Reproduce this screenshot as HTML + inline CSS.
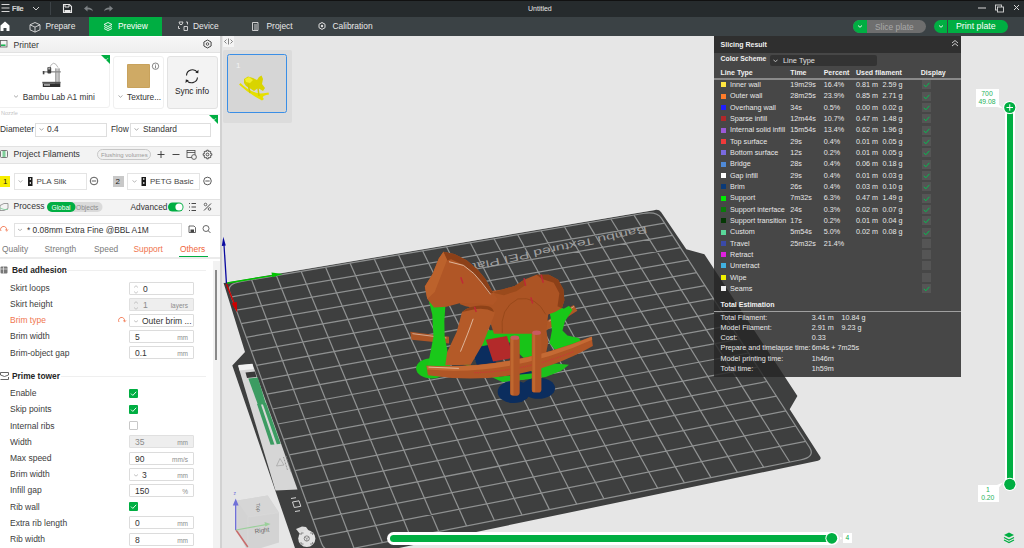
<!DOCTYPE html>
<html><head><meta charset="utf-8">
<style>
*{margin:0;padding:0;box-sizing:border-box}
html,body{width:1024px;height:548px;overflow:hidden;background:#e6e6e6;font-family:"Liberation Sans",sans-serif;}
.a{position:absolute}
.t{position:absolute;white-space:nowrap;line-height:1}
#title{left:0;top:0;width:1024px;height:17px;background:#262b2d;border-top:1px solid #111}
#tabs{left:0;top:17px;width:1024px;height:19px;background:#3b4245}
#left{left:0;top:36px;width:220px;height:512px;background:#fff}
#lborder{left:220px;top:36px;width:2px;height:512px;background:#d2d2d2}
.hdr{position:absolute;left:0;width:220px;background:#f3f3f3;border-bottom:1px solid #e2e2e2}
.lbl{position:absolute;left:10px;font-size:8.5px;color:#3c3c3c;white-space:nowrap;line-height:1}
.inp{position:absolute;left:129px;width:65px;height:13px;border:1px solid #dcdcdc;background:#fff;border-radius:1px}
.inp.dis{background:#eeeeee;border-color:#e0e0e0}
.inp .v{position:absolute;left:5px;top:2px;font-size:8.5px;color:#333;line-height:1}
.inp .u{position:absolute;right:5px;top:4px;font-size:6.5px;color:#8c8c8c;line-height:1}
.chk{position:absolute;left:129px;width:9px;height:9px;background:#00ae42;border-radius:1px}
.chk svg{position:absolute;left:0;top:0}
.sr{position:absolute;font-size:7.2px;color:#e8e8e8;white-space:nowrap;line-height:1}
.sq{position:absolute;left:721px;width:5px;height:5px}
.cb{position:absolute;left:922px;width:9px;height:9px;background:#555}
.cb svg{display:block}
</style></head><body>
<!-- TITLE BAR -->
<div id="title" class="a"></div>
<svg class="a" style="left:0;top:0" width="130" height="17">
 <g stroke="#d8d8d8" stroke-width="1.1"><path d="M1.5,4.5H9.5M1.5,8H9.5M1.5,11.5H9.5"/></g>
 <path d="M33,7l3,3 3,-3" stroke="#d0d0d0" stroke-width="1" fill="none"/>
 <path d="M50.5,2V15" stroke="#3c4246" stroke-width="1"/>
 <path d="M63.5,4.5h6l2,2v6h-8z" stroke="#e8e8e8" stroke-width="1.1" fill="none"/><path d="M65,4.5v2.5h4v-2.5" stroke="#e8e8e8" stroke-width="1" fill="none"/><rect x="64.5" y="10" width="6" height="2" fill="#e8e8e8"/>
 <path d="M84,8.5l3.5,-3v2c3,0 5,1 5.5,4c-1,-1.5 -3,-2 -5.5,-2v2z" fill="#7c8184"/>
 <path d="M113,8.5l-3.5,-3v2c-3,0 -5,1 -5.5,4c1,-1.5 3,-2 5.5,-2v2z" fill="#7c8184"/>
</svg>
<div class="t" style="left:12px;top:4.5px;font-size:7.2px;color:#ececec;-webkit-text-stroke:0.2px #ececec">File</div>
<div class="t" style="left:528px;top:4.5px;font-size:7px;color:#e6e6e6">Untitled</div>
<svg class="a" style="left:970px;top:0" width="54" height="17">
 <path d="M978,8H986" transform="translate(-970,0)" stroke="#d8d8d8" stroke-width="1"/>
 <rect x="25.5" y="5" width="6" height="5" fill="none" stroke="#d8d8d8" stroke-width="0.9"/><rect x="27.5" y="7" width="6" height="5" fill="#262b2d" stroke="#d8d8d8" stroke-width="0.9"/>
 <path d="M44,5l5,5M49,5l-5,5" stroke="#d8d8d8" stroke-width="1"/>
</svg>
<!-- TABS -->
<div id="tabs" class="a"></div>
<div class="a" style="left:89px;top:17px;width:73px;height:19px;background:#00ae42"></div>
<svg class="a" style="left:0;top:17px" width="380" height="19">
 <path d="M0.5,8.5L5,4.5 9.5,8.5V14H6.5V11H3.5V14H0.5Z" fill="#fff"/>
 <path d="M35,5.5l5,2.3v5l-5,2.3 -5,-2.3v-5z M30,7.8l5,2.3 5,-2.3 M35,10.1v5" stroke="#dcdcdc" stroke-width="0.9" fill="none"/>
 <path d="M108,5.5l4,2 -4,2 -4,-2z M104,9.5l4,2 4,-2 M104,11.5l4,2 4,-2" stroke="#fff" stroke-width="0.9" fill="none"/>
 <path d="M179,5h4l-1,2.5h-2z M178.5,9v2.5h1.5 M186,5h1.5v2.5 M184,9.5h3.5v4h-3.5z" stroke="#dcdcdc" stroke-width="0.9" fill="none"/>
 <path d="M252.5,5.5h5.5v8h-5.5z M254,8h3M254,10h3M254,12h3" stroke="#dcdcdc" stroke-width="0.9" fill="none"/>
 <path d="M322,5.5l3,1.7v3.5l-3,1.7 -3,-1.7v-3.5z" stroke="#e0e0e0" stroke-width="1" fill="none"/><circle cx="322" cy="9" r="1.2" fill="#e0e0e0"/>
</svg>
<div class="t" style="left:45.5px;top:21.5px;font-size:8.4px;color:#e9e9e9">Prepare</div>
<div class="t" style="left:118px;top:21.5px;font-size:8.4px;color:#fff">Preview</div>
<div class="t" style="left:193px;top:21.5px;font-size:8.4px;color:#e9e9e9">Device</div>
<div class="t" style="left:266.5px;top:21.5px;font-size:8.4px;color:#e9e9e9">Project</div>
<div class="t" style="left:332.5px;top:21.5px;font-size:8.4px;color:#e9e9e9">Calibration</div>
<!-- slice/print -->
<div class="a" style="left:853px;top:20px;width:73px;height:13px;border-radius:6.5px;background:#6e6e6e;overflow:hidden"><div class="a" style="left:0;top:0;width:13.5px;height:13px;background:#00ae42"></div></div>
<div class="t" style="left:875px;top:22.5px;font-size:8.4px;color:#a9a9a9">Slice plate</div>
<div class="a" style="left:934px;top:20px;width:74px;height:13px;border-radius:6.5px;background:#00ae42"></div>
<div class="a" style="left:947px;top:20px;width:1px;height:13px;background:#3b4245"></div>
<svg class="a" style="left:850px;top:17px" width="110" height="19"><path d="M8,8.5l2,1.8 2,-1.8" stroke="#fff" stroke-width="0.9" fill="none"/><path d="M89,8.5l2,1.8 2,-1.8" stroke="#fff" stroke-width="0.9" fill="none"/></svg>
<div class="t" style="left:956px;top:22px;font-size:8.8px;color:#fff">Print plate</div>

<!-- LEFT PANEL -->
<div id="left" class="a"></div>
<div id="lborder" class="a"></div>
<!-- printer header -->
<div class="hdr" style="top:36px;height:17px;border-top:1px solid #fff;background:linear-gradient(#f6f6f6,#efefef)"></div>
<svg class="a" style="left:0;top:36px" width="220" height="17">
 <rect x="0.5" y="4.5" width="6.5" height="6.5" fill="none" stroke="#5a5a5a" stroke-width="0.8"/><rect x="1" y="8.5" width="4.5" height="1.4" fill="#00ae42"/>
 <path d="M207.5,4l3.6,2v4l-3.6,2 -3.6,-2v-4z" fill="none" stroke="#333" stroke-width="0.9"/><circle cx="207.5" cy="8" r="1.3" fill="none" stroke="#333" stroke-width="0.8"/>
</svg>
<div class="t" style="left:13.5px;top:40.5px;font-size:8.6px;color:#333">Printer</div>
<!-- printer cards -->
<div class="a" style="left:-3px;top:55px;width:113px;height:53px;border:1px solid #f0f0f0;border-radius:3px;background:#fff"></div>
<div class="a" style="left:113px;top:55.5px;width:51px;height:53px;border:1px solid #f0f0f0;border-radius:3px;background:#fff"></div>
<div class="a" style="left:166.5px;top:55.5px;width:51.5px;height:53px;border:1px solid #e2e2e2;border-radius:3px;background:#f3f3f3"></div>
<svg class="a" style="left:0;top:50px" width="220" height="80">
 <path d="M101,5H110V14Z" fill="#00ae42"/><path d="M105,9l1.2,1 2,-2" stroke="#fff" stroke-width="0.6" fill="none"/>
 <!-- printer image -->
 <path d="M49.2,18.3 Q53.6,8.5 58.1,17.6" fill="none" stroke="#9a9a9a" stroke-width="0.7"/>
 <rect x="55.5" y="18.4" width="3.9" height="16.6" fill="#c8c8c8"/><path d="M55.7,18.4v16.6M59.2,18.4v16.6" stroke="#6a6a6a" stroke-width="0.6"/>
 <rect x="42.8" y="21.2" width="18" height="1.3" fill="#8a8a8a"/>
 <rect x="42.8" y="21" width="1.6" height="3.3" fill="#444"/>
 <rect x="47.4" y="17" width="3.8" height="6.5" rx="1" fill="#3c3c3c"/><rect x="48.2" y="17.5" width="2" height="2" fill="#aaa"/>
 <rect x="42.3" y="31.8" width="18.3" height="1.6" fill="#555"/>
 <rect x="42.8" y="33.4" width="17.5" height="3.6" fill="#2e2e2e"/><rect x="44" y="34.2" width="6" height="1.5" fill="#bdbdbd"/>
 <!-- texture plate -->
 <rect x="127" y="14" width="23" height="24" rx="1" fill="#c8a25c"/>
 <rect x="128" y="15" width="21" height="22" fill="#cfaa65"/>
 <circle cx="155.5" cy="16.2" r="3.2" fill="none" stroke="#555" stroke-width="0.7"/><path d="M155.5,15.3v3" stroke="#555" stroke-width="0.7"/><circle cx="155.5" cy="14.2" r="0.4" fill="#555"/>
 <!-- sync -->
 <path d="M186.5,25.5 A6,6 0 0 1 197.5,22.5" fill="none" stroke="#222" stroke-width="1.1"/><path d="M197.5,27.5 A6,6 0 0 1 186.5,30" fill="none" stroke="#222" stroke-width="1.1"/>
 <path d="M198.5,19.8l-0.2,3.5 -3,-0.6z" fill="#222"/><path d="M185.5,33l0.3,-3.6 3,0.8z" fill="#222"/>
 <path d="M14,45.5l2,1.8 2,-1.8" stroke="#888" stroke-width="0.7" fill="none"/>
 <path d="M118.5,45.5l2,1.8 2,-1.8" stroke="#888" stroke-width="0.7" fill="none"/>
</svg>
<div class="t" style="left:22.8px;top:92.5px;font-size:8.3px;color:#333">Bambu Lab A1 mini</div>
<div class="t" style="left:127px;top:92.5px;font-size:8.3px;color:#333">Texture...</div>
<div class="t" style="left:175px;top:87px;font-size:8.3px;color:#222">Sync info</div>
<div class="t" style="left:1px;top:111px;font-size:5.5px;color:#c4c4c4">Nozzle</div>
<div class="a" style="left:20px;top:114px;width:200px;height:1px;background:#f0f0f0"></div>
<svg class="a" style="left:0;top:110px" width="220" height="30"><path d="M209,5H218V14Z" fill="#00ae42"/><path d="M213,9l1.2,1 2,-2" stroke="#fff" stroke-width="0.6" fill="none"/>
<path d="M39.5,18.5l2,1.6 2,-1.6" stroke="#888" stroke-width="0.7" fill="none"/><path d="M134.5,18.5l2,1.6 2,-1.6" stroke="#888" stroke-width="0.7" fill="none"/></svg>
<div class="t" style="left:0px;top:125px;font-size:8.4px;color:#333">Diameter</div>
<div class="a" style="left:35px;top:123px;width:72px;height:13.5px;border:1px solid #dedede"></div>
<div class="t" style="left:47px;top:125px;font-size:8.4px;color:#333">0.4</div>
<div class="t" style="left:111px;top:125px;font-size:8.4px;color:#333">Flow</div>
<div class="a" style="left:130px;top:123px;width:80.5px;height:13.5px;border:1px solid #dedede"></div>
<div class="t" style="left:143px;top:125px;font-size:8.4px;color:#333">Standard</div>
<!-- project filaments -->
<div class="hdr" style="top:146px;height:17.5px;border-top:1px solid #e2e2e2"></div>
<svg class="a" style="left:0;top:146px" width="220" height="18">
 <rect x="0.5" y="4.5" width="7" height="7" rx="1" fill="none" stroke="#5a5a5a" stroke-width="0.8"/><rect x="2.5" y="5" width="3" height="6" fill="#7fcf9a"/>
 <rect x="97.5" y="3.5" width="53" height="10" rx="5" fill="#f0f0f0" stroke="#bdbdbd" stroke-width="0.8"/>
 <path d="M157.5,8.5h7M161,5v7" stroke="#333" stroke-width="0.9"/>
 <path d="M172.5,8.5h7" stroke="#333" stroke-width="0.9"/>
 <rect x="187" y="4.5" width="8" height="7" fill="none" stroke="#444" stroke-width="0.8"/><path d="M187,6.5h8" stroke="#444" stroke-width="0.8"/><circle cx="194" cy="11" r="2.4" fill="#f3f3f3" stroke="#444" stroke-width="0.8"/>
 <path d="M210.58,7.62 L211.83,7.71 L211.83,9.29 L210.58,9.38 L210.30,10.05 L211.12,11.00 L210.00,12.12 L209.05,11.30 L208.38,11.58 L208.29,12.83 L206.71,12.83 L206.62,11.58 L205.95,11.30 L205.00,12.12 L203.88,11.00 L204.70,10.05 L204.42,9.38 L203.17,9.29 L203.17,7.71 L204.42,7.62 L204.70,6.95 L203.88,6.00 L205.00,4.88 L205.95,5.70 L206.62,5.42 L206.71,4.17 L208.29,4.17 L208.38,5.42 L209.05,5.70 L210.00,4.88 L211.12,6.00 L210.30,6.95Z" fill="none" stroke="#333" stroke-width="0.8"/><circle cx="207.5" cy="8.5" r="1.4" fill="none" stroke="#333" stroke-width="0.8"/>
</svg>
<div class="t" style="left:13.5px;top:150px;font-size:8.6px;color:#333">Project Filaments</div>
<div class="t" style="left:101px;top:151.5px;font-size:6px;color:#9a9a9a">Flushing volumes</div>
<!-- filament row -->
<div class="a" style="left:0;top:175.5px;width:10px;height:11px;background:#f7ee00"></div>
<div class="t" style="left:3px;top:177.5px;font-size:8px;color:#222">1</div>
<div class="a" style="left:13.5px;top:173px;width:73px;height:16.5px;border:1px solid #e4e4e4;background:#fff"></div>
<div class="a" style="left:113px;top:176.2px;width:10.5px;height:10.5px;background:#c8c8c8"></div>
<div class="t" style="left:115.5px;top:177.5px;font-size:8px;color:#222">2</div>
<div class="a" style="left:126.5px;top:173px;width:73.5px;height:16.5px;border:1px solid #e4e4e4;background:#fff"></div>
<svg class="a" style="left:0;top:170px" width="220" height="24">
 <path d="M18.5,10.5l2,1.6 2,-1.6" stroke="#999" stroke-width="0.7" fill="none"/>
 <rect x="28" y="7" width="4.5" height="9" fill="#1a1a1a"/><rect x="29.8" y="8" width="1" height="2" fill="#fff"/><rect x="29.8" y="12" width="1" height="2" fill="#fff"/>
 <circle cx="94" cy="11" r="3.8" fill="none" stroke="#333" stroke-width="0.8"/><path d="M91.8,11h4.4" stroke="#333" stroke-width="0.8"/>
 <path d="M132.5,10.5l2,1.6 2,-1.6" stroke="#999" stroke-width="0.7" fill="none"/>
 <rect x="141.5" y="7" width="4.5" height="9" fill="#1a1a1a"/><rect x="143.3" y="8" width="1" height="2" fill="#fff"/><rect x="143.3" y="12" width="1" height="2" fill="#fff"/>
 <circle cx="207.5" cy="11" r="3.8" fill="none" stroke="#333" stroke-width="0.8"/><path d="M205.3,11h4.4" stroke="#333" stroke-width="0.8"/>
</svg>
<div class="t" style="left:36.5px;top:177.6px;font-size:8px;color:#444">PLA Silk</div>
<div class="t" style="left:150px;top:177.6px;font-size:8px;color:#444">PETG Basic</div>
<!-- process header -->
<div class="hdr" style="top:198.5px;height:17px;border-top:1px solid #e2e2e2"></div>
<svg class="a" style="left:0;top:198px" width="220" height="18">
 <path d="M0,7.5l4,-2h4v5l-4,2h-4z" fill="none" stroke="#777" stroke-width="0.7"/><path d="M0,10l4,1.5h4" fill="none" stroke="#7fcf9a" stroke-width="0.8"/>
 <rect x="47" y="4" width="55.5" height="10" rx="5" fill="#dadada"/>
 <rect x="47" y="4" width="28.5" height="10" rx="5" fill="#00ae42"/>
 <rect x="168" y="4.5" width="15.5" height="9" rx="4.5" fill="#00ae42"/><circle cx="179" cy="9" r="3.6" fill="#fff"/>
 <path d="M189,5.5h1M189,9h1M189,12.5h1M191.5,5.5h4.5M191.5,9h4.5M191.5,12.5h4.5" stroke="#333" stroke-width="0.9"/>
 <path d="M204,12.5l7,-7" stroke="#333" stroke-width="0.9"/><circle cx="205.5" cy="6.5" r="1.3" fill="none" stroke="#333" stroke-width="0.7"/><circle cx="209.5" cy="11" r="1.3" fill="none" stroke="#333" stroke-width="0.7"/>
</svg>
<div class="t" style="left:13.5px;top:202px;font-size:8.6px;color:#333">Process</div>
<div class="t" style="left:51.5px;top:204.5px;font-size:6.6px;color:#fff">Global</div>
<div class="t" style="left:76px;top:204.5px;font-size:6.6px;color:#8c8c8c">Objects</div>
<div class="t" style="left:130.5px;top:203px;font-size:8.3px;color:#333">Advanced</div>
<!-- preset row -->
<div class="a" style="left:13.5px;top:222.7px;width:168px;height:14px;border:1px solid #e2e2e2;background:#fff"></div>
<svg class="a" style="left:0;top:218px" width="220" height="22">
 <path d="M1,13 A3,3 0 1 1 6.5,12" fill="none" stroke="#f0653a" stroke-width="0.8"/><path d="M5.5,11.5l1.2,1.8 1.3,-1.9" fill="none" stroke="#f0653a" stroke-width="0.7"/>
 <path d="M18,11l2,1.6 2,-1.6" stroke="#999" stroke-width="0.7" fill="none"/>
 <path d="M189,8h5l1.5,1.5v5h-6.5z" fill="none" stroke="#444" stroke-width="0.8"/><path d="M190.5,11.5h3.5v3h-3.5z" fill="#444"/>
 <circle cx="206" cy="10.5" r="3" fill="none" stroke="#444" stroke-width="0.8"/><path d="M208.2,12.7l2.2,2.2" stroke="#444" stroke-width="0.9"/>
</svg>
<div class="t" style="left:27px;top:225.5px;font-size:8.4px;color:#333">* 0.08mm Extra Fine @BBL A1M</div>
<!-- tabs -->
<div class="t" style="left:2px;top:244.5px;font-size:8.4px;color:#7a7a7a">Quality</div>
<div class="t" style="left:44.5px;top:244.5px;font-size:8.4px;color:#7a7a7a">Strength</div>
<div class="t" style="left:94px;top:244.5px;font-size:8.4px;color:#7a7a7a">Speed</div>
<div class="t" style="left:133.5px;top:244.5px;font-size:8.4px;color:#f0764f">Support</div>
<div class="t" style="left:180px;top:244.5px;font-size:8.4px;color:#f0653a">Others</div>
<div class="a" style="left:179px;top:256px;width:29px;height:1.5px;background:#00ae42"></div>
<div class="a" style="left:0;top:257px;width:220px;height:1.5px;background:#ebebeb"></div>
<!-- scrollbar -->
<div class="a" style="left:213px;top:261px;width:7px;height:287px;background:#f2f2f2"></div>
<div class="a" style="left:215px;top:270px;width:2px;height:90px;background:#8a8a8a"></div>

<!-- FORM -->
<div class="t" style="left:12px;top:265.6px;font-size:8.4px;font-weight:bold;color:#262626">Bed adhesion</div>
<svg class="a" style="left:0;top:264px" width="10" height="12"><rect x="0.5" y="2.5" width="7" height="7" rx="1" fill="#777"/><path d="M0.5,5h7M3.5,2.5v7" stroke="#fff" stroke-width="0.6"/></svg>
<div class="a" style="left:66px;top:270px;width:140px;height:1px;background:#efefef"></div>
<div class="lbl" style="top:283.8px;color:#3c3c3c">Skirt loops</div>
<div class="inp" style="top:281.5px"><svg class="a" style="left:1px;top:0" width="10" height="13"><path d="M3,4.5l2,-1.8 2,1.8M3,8.5l2,1.8 2,-1.8" stroke="#b0b0b0" stroke-width="0.7" fill="none"/></svg><span class="v" style="left:13px;color:#333">0</span></div>
<div class="lbl" style="top:299.8px;color:#3c3c3c">Skirt height</div>
<div class="inp dis" style="top:297.5px"><svg class="a" style="left:1px;top:0" width="10" height="13"><path d="M3,4.5l2,-1.8 2,1.8M3,8.5l2,1.8 2,-1.8" stroke="#b0b0b0" stroke-width="0.7" fill="none"/></svg><span class="v" style="left:13px;color:#8a8a8a">1</span><span class="u">layers</span></div>
<div class="lbl" style="top:316.0px;color:#f0764f">Brim type</div>
<div class="inp" style="top:313.7px"><svg class="a" style="left:1px;top:0" width="10" height="13"><path d="M3,5.5l2,1.6 2,-1.6" stroke="#aaa" stroke-width="0.7" fill="none"/></svg><span class="v" style="left:12px;color:#333">Outer brim ...</span></div>
<svg class="a" style="left:117px;top:314px" width="10" height="12"><path d="M2,8 A3,3 0 1 1 7.5,7" fill="none" stroke="#f0653a" stroke-width="0.8"/><path d="M6.5,6.3l1.1,1.8 1.4,-1.8" fill="none" stroke="#f0653a" stroke-width="0.7"/></svg>
<div class="lbl" style="top:332.3px;color:#3c3c3c">Brim width</div>
<div class="inp" style="top:330.0px"><span class="v" style="left:5px;color:#333">5</span><span class="u">mm</span></div>
<div class="lbl" style="top:348.5px;color:#3c3c3c">Brim-object gap</div>
<div class="inp" style="top:346.2px"><span class="v" style="left:5px;color:#333">0.1</span><span class="u">mm</span></div>
<div class="t" style="left:12px;top:371.6px;font-size:8.4px;font-weight:bold;color:#262626">Prime tower</div>
<svg class="a" style="left:0;top:370px" width="10" height="12"><path d="M0.5,2.5h8v2.5l-4,1.5 -4,-1.5z M0.5,9.5h8v-2.5" fill="none" stroke="#555" stroke-width="0.9"/></svg>
<div class="a" style="left:61px;top:376px;width:145px;height:1px;background:#efefef"></div>
<div class="lbl" style="top:389.1px;color:#3c3c3c">Enable</div>
<div class="chk" style="top:388.8px"><svg width="9" height="9"><path d="M2,4.6l1.8,1.8 3.4,-3.6" stroke="#fff" stroke-width="0.9" fill="none"/></svg></div>
<div class="lbl" style="top:405.3px;color:#3c3c3c">Skip points</div>
<div class="chk" style="top:405.0px"><svg width="9" height="9"><path d="M2,4.6l1.8,1.8 3.4,-3.6" stroke="#fff" stroke-width="0.9" fill="none"/></svg></div>
<div class="lbl" style="top:421.5px;color:#3c3c3c">Internal ribs</div>
<div class="chk" style="top:421.2px;background:#fff;border:1px solid #c8c8c8"></div>
<div class="lbl" style="top:437.7px;color:#3c3c3c">Width</div>
<div class="inp dis" style="top:435.4px"><span class="v" style="left:5px;color:#8a8a8a">35</span><span class="u">mm</span></div>
<div class="lbl" style="top:453.9px;color:#3c3c3c">Max speed</div>
<div class="inp" style="top:451.6px"><span class="v" style="left:5px;color:#333">90</span><span class="u">mm/s</span></div>
<div class="lbl" style="top:470.1px;color:#3c3c3c">Brim width</div>
<div class="inp" style="top:467.8px"><svg class="a" style="left:1px;top:0" width="10" height="13"><path d="M3,5.5l2,1.6 2,-1.6" stroke="#aaa" stroke-width="0.7" fill="none"/></svg><span class="v" style="left:12px;color:#333">3</span><span class="u">mm</span></div>
<div class="lbl" style="top:486.3px;color:#3c3c3c">Infill gap</div>
<div class="inp" style="top:484.0px"><span class="v" style="left:5px;color:#333">150</span><span class="u">%</span></div>
<div class="lbl" style="top:502.5px;color:#3c3c3c">Rib wall</div>
<div class="chk" style="top:502.2px"><svg width="9" height="9"><path d="M2,4.6l1.8,1.8 3.4,-3.6" stroke="#fff" stroke-width="0.9" fill="none"/></svg></div>
<div class="lbl" style="top:518.7px;color:#3c3c3c">Extra rib length</div>
<div class="inp" style="top:516.4px"><span class="v" style="left:5px;color:#333">0</span><span class="u">mm</span></div>
<div class="lbl" style="top:534.9px;color:#3c3c3c">Rib width</div>
<div class="inp" style="top:532.6px"><span class="v" style="left:5px;color:#333">8</span><span class="u">mm</span></div>
<!-- CANVAS -->
<svg class="a" style="left:0;top:0" width="1024" height="548" viewBox="0 0 1024 548">
<path d="M223.6,283 L655,210 Q659,209.3 661,212 L686.3,249.2 L704.4,254.3 L797.4,396.1 L789.7,409.2 L820.4,457 Q821.5,460 818,460.8 L375,553 L295,548 L232.3,365.5 L245,352 Z" fill="#3e3f3f"/>
<path d="M251.6,279.7L354.0,548.2M231.5,296.9L664.6,223.1M276.4,275.5L382.4,542.6M236.3,310.2L672.5,235.3M301.1,271.3L410.6,537.0M241.2,323.6L680.4,247.6M325.6,267.2L438.7,531.5M246.2,337.3L688.5,260.1M350.0,263.1L466.6,526.0M251.3,351.2L696.7,272.7M374.3,259.0L494.4,520.5M256.4,365.3L705.0,285.6M398.5,254.9L522.0,515.0M261.7,379.6L713.4,298.7M422.6,250.8L549.5,509.6M267.0,394.2L722.0,311.9M446.5,246.8L576.8,504.2M272.4,409.0L730.7,325.4M470.3,242.7L603.9,498.8M277.9,424.0L739.6,339.1M494.1,238.7L630.9,493.5M283.5,439.3L748.6,353.0M517.7,234.7L657.7,488.2M289.2,454.8L757.7,367.1M541.1,230.8L684.4,482.9M295.0,470.7L767.0,381.5M564.5,226.8L711.0,477.6M300.8,486.7L776.4,396.1M587.8,222.9L737.4,472.4M306.8,503.1L786.0,410.9M610.9,219.0L763.6,467.2M312.9,519.7L795.7,426.0M634.0,215.1L789.7,462.0M319.1,536.7L805.6,441.3" stroke="#8f9191" stroke-width="1.25" fill="none"/>
<path d="M241.7,281.4L643.2,213.5Q656.9,211.2 661.5,218.3L809.6,447.5Q815.7,456.9 800.1,460.0L342.6,550.5Q325.4,553.9 321.6,543.5L229.6,291.7Q226.7,283.9 241.7,281.4Z" stroke="#8f9191" stroke-width="1.25" fill="none"/>
<path d="M224,282.6 L655,209.6" stroke="#f2f2f2" stroke-width="0.6" opacity="0.8"/>

<!-- axes -->
<path d="M226.4,283 L224,245" stroke="#0a0aa0" stroke-width="1.3"/>
<path d="M223.3,236.8 L221.8,246 L225.8,245.6 Z" fill="#0a0aa0"/>
<path d="M227.3,283 L272,275.6" stroke="#00c400" stroke-width="1.4"/>
<path d="M283,273.9 L271.5,272.6 L272.3,277.3 Z" fill="#00c400"/>
<path d="M226.4,284 L234,303" stroke="#d00000" stroke-width="1.4"/>
<path d="M237.2,312.5 L231.8,303.5 L236.8,301.8 Z" fill="#d00000"/>
<!-- bed label text -->
<text x="0" y="0" transform="translate(555.5,249) rotate(167.9) scale(1.6,1)" text-anchor="middle" dominant-baseline="central" font-family="Liberation Sans" font-size="10" fill="#a0a0a0">Bambu Textured PEI Plate</text>
<!-- sticker -->
<path d="M238,365.5 L252.5,364 L297.5,489.5 L275.5,490.5 Z" fill="#d6d6d6"/>
<path d="M238.4,365 L252.4,363.7 L253.5,369 L239.5,370.5 Z" fill="#f2f2f2"/>
<path d="M245.5,372.5 L255,371.5 L256.5,377 L247,378 Z" fill="#3a3a3a"/>
<path d="M248.3,378.5 L257.8,377.6 L266,404 L258,405 Z" fill="#3c9c62"/>
<path d="M257,404 L260.6,403.6 L274.4,444.4 L270.6,444.8 Z" fill="#3c9c62"/>
<path d="M262.5,403.3 L266.1,402.9 L280.6,443.8 L276.8,444.2 Z" fill="#3c9c62"/>
<path d="M276.5,466 L280,458.5 L284,465 Z" fill="none" stroke="#999" stroke-width="0.6"/>
<path d="M283.5,457 L287.5,470 M286,456 L291,472" stroke="#8a8a8a" stroke-width="0.9" stroke-dasharray="1 0.6"/>
<!-- bed small icons -->
<path d="M291,498.5l5,-0.8M292.5,502l6.5,-1.2 1.8,5.5 -6.5,1.2z M295,511.5l5,-0.8" stroke="#e4e4e4" stroke-width="0.9" fill="none"/>
<!-- camera icon -->
<path d="M296,529 L302,526.5 L306,527 L309,531 L300,534 Z" fill="#dcdcdc"/>
<circle cx="306.8" cy="538.5" r="8.6" fill="#e2e2e2"/>
<path d="M301,535v-2h2.5M312.6,535v-2h-2.5M301,542v2h2.5M312.6,542v2h-2.5" stroke="#707070" stroke-width="0.8" fill="none"/><circle cx="306.8" cy="538.5" r="2.6" fill="none" stroke="#707070" stroke-width="0.8"/><path d="M306.8,538.5v2.6M306.8,538.5l-2.2,-1.4M306.8,538.5l2.2,-1.4" stroke="#707070" stroke-width="0.6"/>
<!-- view cube -->
<path d="M237.1,500.6 L267.7,495.6 L279,512.7 L279,542.6 L247.8,552 L237.1,530 Z" fill="#d3d3d3"/>
<path d="M237.1,500.6 L267.7,495.6 L279,512.7 L248,517 Z" fill="#d6d6d6"/>
<path d="M248,517 L279,512.7 M248,517 L247.8,552" stroke="#dadada" stroke-width="0.5"/>
<text x="0" y="0" font-family="Liberation Sans" font-size="6.3" fill="#6a6a6a" transform="translate(255,533.5) rotate(-8)">Right</text>
<text x="0" y="0" font-family="Liberation Sans" font-size="5.2" fill="#6a6a6a" transform="translate(256,503.5) rotate(82)">Top</text>
<path d="M235.7,530 L235.7,504" stroke="#7070d8" stroke-width="1.4"/><path d="M235.7,498.4 L232.8,505.5 L238.6,505.5 Z" fill="#7070d8"/>
<text x="233.4" y="495" font-family="Liberation Sans" font-size="5" fill="#7070d8">z</text>
<path d="M236,530 L247.8,547" stroke="#c86a6a" stroke-width="1.5"/>
<path d="M236,530 L266,524.6" stroke="#9ad09a" stroke-width="1.1"/><path d="M270.5,524 L264.5,522 L265.3,526.5 Z" fill="#9ad09a"/>
<!-- HORSE -->
<g transform="translate(400,240) scale(0.31008)">
 <!-- back rocker -->
 <path d="M33,296 L158,312 L158,334 L37,322 Z" fill="#ac5526"/>
 <path d="M40,302 L150,316" stroke="#e8d0c0" stroke-width="2.2"/>
 <path d="M455,272 L560,210 L572,228 L468,294 Z" fill="#b05826"/>
 <path d="M480,262 L562,214" stroke="#e8d0c0" stroke-width="2"/>
 <!-- green -->
 <ellipse cx="102" cy="414" rx="50" ry="33" fill="#18c418"/>
 <path d="M88,176 L115,188 L152,198 L146,218 L143,262 L144,311 L158,384 L162,410 L88,410 L94,384 L108,311 L104,240 Z" fill="#1ac81a"/>
 <path d="M200,398 L330,458 L420,448 L470,442 L520,422 L545,402 L500,398 L420,418 L330,420 Z" fill="#1cc01c"/>
 <path d="M476,205 L505,210 L528,222 L545,212 L556,226 L532,262 L524,292 L540,308 L576,316 L592,336 L568,352 L500,354 L482,332 L490,292 L486,250 Z" fill="#18c818"/>
 <path d="M230,292 L400,290 L432,300 L442,380 L410,392 L380,362 L362,330 L240,345 Z" fill="#18c418"/>
 <!-- blue brim -->
 <path d="M230,350 L292,338 L310,398 L248,404 Z" fill="#0b2d5e"/>
 <path d="M290,415 L400,400 L430,430 L320,440 Z" fill="#0b2d5e"/>
 <ellipse cx="367" cy="490" rx="52" ry="36" fill="#0b2d5e"/>
 <ellipse cx="446" cy="478" rx="54" ry="34" fill="#0b2d5e"/>
 <!-- red seat -->
 <path d="M277,322 L345,310 L366,380 L300,392 Z" fill="#b32a2a"/>
 <!-- body piece -->
 <path d="M290,165 L330,160 L370,148 L400,128 L440,112 L480,112 L510,128 L527,160 L530,195 L522,220 L500,232 L478,240 L472,290 L478,330 L470,372 L445,376 L440,320 L425,302 L303,302 L290,262 L250,222 L212,214 L192,206 L205,188 Z" fill="#ac5424"/>
 <!-- head piece -->
 <path d="M140,38 L175,45 L215,65 L250,95 L275,125 L300,170 L315,190 L300,210 L250,205 L195,203 L150,215 L110,218 L88,190 L80,150 L105,110 L125,60 Z" fill="#b05626"/>
 <!-- front leg piece -->
 <path d="M200,232 Q236,204 286,214 Q312,226 303,244 L267,335 L228,402 L146,404 L152,362 L183,296 Z" fill="#b45a28"/>
 <path d="M200,232 Q236,204 286,214 Q300,220 303,232 Q270,215 230,226 Z" fill="#8e4218"/>
 <path d="M236,254 Q220,300 195,360" stroke="#f0e0d0" stroke-width="2.2" fill="none"/>
 <!-- head top face -->
 <path d="M140,38 L175,45 L215,65 L250,95 L275,125 L300,170 L288,173 L262,136 L236,107 L203,80 L165,62 L150,66 Z" fill="#8c4018"/>
 <path d="M158,70 L205,82 L238,108 L264,138 L292,175" stroke="#f4e4d4" stroke-width="2.2" fill="none"/>
 <path d="M125,60 L140,38 L152,64 L112,168 L88,190 L80,150 L105,110 Z" fill="#bc622c"/>
 <!-- rump shade -->
 <path d="M440,112 L480,112 L510,128 L527,160 L530,195 L522,220 L508,214 L514,172 L496,138 L458,126 Z" fill="#8c4018"/>
 <path d="M300,170 L330,160 L370,148 L400,128 L405,145 L375,165 L335,178 Z" fill="#9a4a1c"/>
 <!-- hind disk edge -->
 <path d="M330,300 Q320,220 380,190 Q440,180 470,240" stroke="#98481a" stroke-width="3" fill="none"/>
 <!-- slots -->
 <path d="M196,120 L203,140 M240,215 L246,232 M400,123 L405,148 M455,112 L462,138 M422,185 L428,205" stroke="#c02838" stroke-width="4.5"/>
 <!-- front rocker -->
 <path d="M85,405 Q353,420 618,311 L622,342 Q380,480 90,436 Z" fill="#b05626"/>
 <path d="M86,406 Q353,421 619,312 L620,322 Q360,440 88,418 Z" fill="#c46a34"/>
 <path d="M92,410 L190,414" stroke="#f0dcc8" stroke-width="2.2"/>
 <path d="M240,428 Q400,424 560,360" stroke="#c83838" stroke-width="4" stroke-dasharray="3 3" fill="none"/>
 <!-- posts -->
 <rect x="355" y="312" width="31" height="190" rx="10" fill="#b05626"/>
 <rect x="357" y="312" width="9" height="188" fill="#c06830"/>
 <ellipse cx="370.5" cy="315" rx="14" ry="7" fill="#c85a60"/>
 <rect x="425" y="296" width="31" height="196" rx="10" fill="#b05626"/>
 <rect x="427" y="296" width="9" height="194" fill="#c06830"/>
 <ellipse cx="440.5" cy="299" rx="14" ry="7" fill="#c85a60"/>
</g>
</svg>


<!-- thumbnails -->
<div class="a" style="left:223px;top:36px;width:11px;height:11px;background:#f4f4f4"></div>
<svg class="a" style="left:223px;top:36px" width="11" height="11"><path d="M3.5,3.5l-2,2 2,2M7.5,3.5l2,2 -2,2M5.5,2.5v6" stroke="#555" stroke-width="0.7" fill="none"/></svg>
<div class="a" style="left:223.3px;top:49.8px;width:68.3px;height:73.6px;background:#dcdcdc;border-radius:2px"></div>
<div class="a" style="left:227px;top:53.6px;width:59.7px;height:59.6px;background:#d6d6d6;border:1.5px solid #3a8ee6;border-radius:2.5px"></div>
<div class="t" style="left:236px;top:62px;font-size:8px;color:#f2f2f2">1</div>
<svg class="a" style="left:227px;top:53px" width="60" height="60">
 <path d="M12,31.5 Q22,41 35,47.5 L37,46 Q33,43 42,41.5 L41.5,39.5 Q33,41 30,40 Q20,37 13.5,30 Z" fill="#e6e000"/>
 <path d="M17,26 L21,23.5 L26,25 L30,27 L32,24 L34.5,22.5 L36,26 L35,31 L38,35 L36,38 L31,35 L27,38 L24,36 L19,33 L17,30 Z" fill="#d9d400"/>
 <path d="M18,26 L22,24 L26,27 L23,30 L19,29 Z" fill="#f2ee30"/>
 <path d="M21,31 L23,40 M31,35 L32,43" stroke="#d0cc00" stroke-width="1.5"/>
</svg>
<!-- SLICING RESULT PANEL -->
<div class="a" style="left:714px;top:36px;width:247px;height:17px;background:rgba(40,40,40,0.96)"></div>
<div class="a" style="left:714px;top:53px;width:247px;height:324px;background:rgba(38,38,38,0.83)"></div>

<div class="t" style="left:720.6px;top:41.3px;font-size:7px;font-weight:bold;color:#f0f0f0">Slicing Result</div>
<svg class="a" style="left:950px;top:38px" width="10" height="12"><path d="M2,5l3,-2.5 3,2.5M2,8l3,-2.5 3,2.5" stroke="#ddd" stroke-width="0.9" fill="none"/></svg>
<div class="t" style="left:720.6px;top:56.1px;font-size:6.8px;font-weight:bold;color:#f0f0f0">Color Scheme</div>
<div class="a" style="left:770.3px;top:55px;width:106.5px;height:11px;background:#333;border-radius:2px"></div>
<svg class="a" style="left:770.3px;top:54.7px" width="14" height="12"><path d="M3.5,5l2,1.5 2,-1.5" stroke="#ddd" stroke-width="0.8" fill="none"/></svg>
<div class="t" style="left:783px;top:56.5px;font-size:7.4px;color:#e0e0e0">Line Type</div>
<div class="t" style="left:720.6px;top:69px;font-size:7px;font-weight:bold;color:#f0f0f0">Line Type</div>
<div class="t" style="left:790.3px;top:69px;font-size:7px;font-weight:bold;color:#f0f0f0">Time</div>
<div class="t" style="left:823.7px;top:69px;font-size:7px;font-weight:bold;color:#f0f0f0">Percent</div>
<div class="t" style="left:856px;top:69px;font-size:7px;font-weight:bold;color:#f0f0f0">Used filament</div>
<div class="t" style="left:920.8px;top:69px;font-size:7px;font-weight:bold;color:#f0f0f0">Display</div>
<div class="a" style="left:714px;top:78px;width:247px;height:1.5px;background:#8a8a8a"></div>
<div class="sq" style="top:82.3px;background:#ffe640"></div>
<div class="sr" style="left:730px;top:81.1px">Inner wall</div>
<div class="sr" style="left:790.3px;top:81.1px">19m29s</div>
<div class="sr" style="left:823.7px;top:81.1px">16.4%</div>
<div class="sr" style="left:856px;top:81.1px">0.81 m</div>
<div class="sr" style="left:882.5px;top:81.1px">2.59 g</div>
<div class="cb" style="top:80.3px"><svg width="9" height="9"><path d="M1.8,4.8l2,2 3.6,-4" stroke="#00c050" stroke-width="1" fill="none"/></svg></div>
<div class="sq" style="top:93.6px;background:#ff7c2a"></div>
<div class="sr" style="left:730px;top:92.4px">Outer wall</div>
<div class="sr" style="left:790.3px;top:92.4px">28m25s</div>
<div class="sr" style="left:823.7px;top:92.4px">23.9%</div>
<div class="sr" style="left:856px;top:92.4px">0.85 m</div>
<div class="sr" style="left:882.5px;top:92.4px">2.71 g</div>
<div class="cb" style="top:91.6px"><svg width="9" height="9"><path d="M1.8,4.8l2,2 3.6,-4" stroke="#00c050" stroke-width="1" fill="none"/></svg></div>
<div class="sq" style="top:104.9px;background:#1f1fff"></div>
<div class="sr" style="left:730px;top:103.7px">Overhang wall</div>
<div class="sr" style="left:790.3px;top:103.7px">34s</div>
<div class="sr" style="left:823.7px;top:103.7px">0.5%</div>
<div class="sr" style="left:856px;top:103.7px">0.00 m</div>
<div class="sr" style="left:882.5px;top:103.7px">0.02 g</div>
<div class="cb" style="top:102.9px"><svg width="9" height="9"><path d="M1.8,4.8l2,2 3.6,-4" stroke="#00c050" stroke-width="1" fill="none"/></svg></div>
<div class="sq" style="top:116.3px;background:#b0282a"></div>
<div class="sr" style="left:730px;top:115.1px">Sparse infill</div>
<div class="sr" style="left:790.3px;top:115.1px">12m44s</div>
<div class="sr" style="left:823.7px;top:115.1px">10.7%</div>
<div class="sr" style="left:856px;top:115.1px">0.47 m</div>
<div class="sr" style="left:882.5px;top:115.1px">1.48 g</div>
<div class="cb" style="top:114.3px"><svg width="9" height="9"><path d="M1.8,4.8l2,2 3.6,-4" stroke="#00c050" stroke-width="1" fill="none"/></svg></div>
<div class="sq" style="top:127.6px;background:#9a5ad8"></div>
<div class="sr" style="left:730px;top:126.4px">Internal solid infill</div>
<div class="sr" style="left:790.3px;top:126.4px">15m54s</div>
<div class="sr" style="left:823.7px;top:126.4px">13.4%</div>
<div class="sr" style="left:856px;top:126.4px">0.62 m</div>
<div class="sr" style="left:882.5px;top:126.4px">1.96 g</div>
<div class="cb" style="top:125.6px"><svg width="9" height="9"><path d="M1.8,4.8l2,2 3.6,-4" stroke="#00c050" stroke-width="1" fill="none"/></svg></div>
<div class="sq" style="top:138.9px;background:#f03a3a"></div>
<div class="sr" style="left:730px;top:137.7px">Top surface</div>
<div class="sr" style="left:790.3px;top:137.7px">29s</div>
<div class="sr" style="left:823.7px;top:137.7px">0.4%</div>
<div class="sr" style="left:856px;top:137.7px">0.01 m</div>
<div class="sr" style="left:882.5px;top:137.7px">0.05 g</div>
<div class="cb" style="top:136.9px"><svg width="9" height="9"><path d="M1.8,4.8l2,2 3.6,-4" stroke="#00c050" stroke-width="1" fill="none"/></svg></div>
<div class="sq" style="top:150.2px;background:#7a6ae0"></div>
<div class="sr" style="left:730px;top:149.0px">Bottom surface</div>
<div class="sr" style="left:790.3px;top:149.0px">12s</div>
<div class="sr" style="left:823.7px;top:149.0px">0.2%</div>
<div class="sr" style="left:856px;top:149.0px">0.01 m</div>
<div class="sr" style="left:882.5px;top:149.0px">0.05 g</div>
<div class="cb" style="top:148.2px"><svg width="9" height="9"><path d="M1.8,4.8l2,2 3.6,-4" stroke="#00c050" stroke-width="1" fill="none"/></svg></div>
<div class="sq" style="top:161.5px;background:#4f8ad8"></div>
<div class="sr" style="left:730px;top:160.3px">Bridge</div>
<div class="sr" style="left:790.3px;top:160.3px">28s</div>
<div class="sr" style="left:823.7px;top:160.3px">0.4%</div>
<div class="sr" style="left:856px;top:160.3px">0.06 m</div>
<div class="sr" style="left:882.5px;top:160.3px">0.18 g</div>
<div class="cb" style="top:159.5px"><svg width="9" height="9"><path d="M1.8,4.8l2,2 3.6,-4" stroke="#00c050" stroke-width="1" fill="none"/></svg></div>
<div class="sq" style="top:172.9px;background:#ffffff"></div>
<div class="sr" style="left:730px;top:171.7px">Gap infill</div>
<div class="sr" style="left:790.3px;top:171.7px">29s</div>
<div class="sr" style="left:823.7px;top:171.7px">0.4%</div>
<div class="sr" style="left:856px;top:171.7px">0.01 m</div>
<div class="sr" style="left:882.5px;top:171.7px">0.03 g</div>
<div class="cb" style="top:170.9px"><svg width="9" height="9"><path d="M1.8,4.8l2,2 3.6,-4" stroke="#00c050" stroke-width="1" fill="none"/></svg></div>
<div class="sq" style="top:184.2px;background:#0a3a78"></div>
<div class="sr" style="left:730px;top:183.0px">Brim</div>
<div class="sr" style="left:790.3px;top:183.0px">26s</div>
<div class="sr" style="left:823.7px;top:183.0px">0.4%</div>
<div class="sr" style="left:856px;top:183.0px">0.03 m</div>
<div class="sr" style="left:882.5px;top:183.0px">0.10 g</div>
<div class="cb" style="top:182.2px"><svg width="9" height="9"><path d="M1.8,4.8l2,2 3.6,-4" stroke="#00c050" stroke-width="1" fill="none"/></svg></div>
<div class="sq" style="top:195.5px;background:#00ee00"></div>
<div class="sr" style="left:730px;top:194.3px">Support</div>
<div class="sr" style="left:790.3px;top:194.3px">7m32s</div>
<div class="sr" style="left:823.7px;top:194.3px">6.3%</div>
<div class="sr" style="left:856px;top:194.3px">0.47 m</div>
<div class="sr" style="left:882.5px;top:194.3px">1.49 g</div>
<div class="cb" style="top:193.5px"><svg width="9" height="9"><path d="M1.8,4.8l2,2 3.6,-4" stroke="#00c050" stroke-width="1" fill="none"/></svg></div>
<div class="sq" style="top:206.8px;background:#0a7a0a"></div>
<div class="sr" style="left:730px;top:205.6px">Support interface</div>
<div class="sr" style="left:790.3px;top:205.6px">24s</div>
<div class="sr" style="left:823.7px;top:205.6px">0.3%</div>
<div class="sr" style="left:856px;top:205.6px">0.02 m</div>
<div class="sr" style="left:882.5px;top:205.6px">0.07 g</div>
<div class="cb" style="top:204.8px"><svg width="9" height="9"><path d="M1.8,4.8l2,2 3.6,-4" stroke="#00c050" stroke-width="1" fill="none"/></svg></div>
<div class="sq" style="top:218.1px;background:#053805"></div>
<div class="sr" style="left:730px;top:216.9px">Support transition</div>
<div class="sr" style="left:790.3px;top:216.9px">17s</div>
<div class="sr" style="left:823.7px;top:216.9px">0.2%</div>
<div class="sr" style="left:856px;top:216.9px">0.01 m</div>
<div class="sr" style="left:882.5px;top:216.9px">0.04 g</div>
<div class="cb" style="top:216.1px"><svg width="9" height="9"><path d="M1.8,4.8l2,2 3.6,-4" stroke="#00c050" stroke-width="1" fill="none"/></svg></div>
<div class="sq" style="top:229.5px;background:#5ad89a"></div>
<div class="sr" style="left:730px;top:228.3px">Custom</div>
<div class="sr" style="left:790.3px;top:228.3px">5m54s</div>
<div class="sr" style="left:823.7px;top:228.3px">5.0%</div>
<div class="sr" style="left:856px;top:228.3px">0.02 m</div>
<div class="sr" style="left:882.5px;top:228.3px">0.08 g</div>
<div class="cb" style="top:227.5px"><svg width="9" height="9"><path d="M1.8,4.8l2,2 3.6,-4" stroke="#00c050" stroke-width="1" fill="none"/></svg></div>
<div class="sq" style="top:240.8px;background:#3a4aa8"></div>
<div class="sr" style="left:730px;top:239.6px">Travel</div>
<div class="sr" style="left:790.3px;top:239.6px">25m32s</div>
<div class="sr" style="left:823.7px;top:239.6px">21.4%</div>
<div class="cb" style="top:238.8px"></div>
<div class="sq" style="top:252.1px;background:#e020e0"></div>
<div class="sr" style="left:730px;top:250.9px">Retract</div>
<div class="cb" style="top:250.1px"></div>
<div class="sq" style="top:263.4px;background:#40b0e0"></div>
<div class="sr" style="left:730px;top:262.2px">Unretract</div>
<div class="cb" style="top:261.4px"></div>
<div class="sq" style="top:274.7px;background:#f0f000"></div>
<div class="sr" style="left:730px;top:273.5px">Wipe</div>
<div class="cb" style="top:272.7px"></div>
<div class="sq" style="top:286.1px;background:#f0f0f0"></div>
<div class="sr" style="left:730px;top:284.9px">Seams</div>
<div class="cb" style="top:284.1px"><svg width="9" height="9"><path d="M1.8,4.8l2,2 3.6,-4" stroke="#00c050" stroke-width="1" fill="none"/></svg></div>
<div class="t" style="left:720.6px;top:301px;font-size:7px;font-weight:bold;color:#f0f0f0">Total Estimation</div>
<div class="a" style="left:714px;top:311px;width:247px;height:1px;background:#a0a0a0"></div>
<div class="sr" style="left:720.6px;top:313.8px">Total Filament:</div>
<div class="sr" style="left:811.8px;top:313.8px">3.41 m</div>
<div class="sr" style="left:841.5px;top:313.8px">10.84 g</div>
<div class="sr" style="left:720.6px;top:324.0px">Model Filament:</div>
<div class="sr" style="left:811.8px;top:324.0px">2.91 m</div>
<div class="sr" style="left:841.5px;top:324.0px">9.23 g</div>
<div class="sr" style="left:720.6px;top:334.2px">Cost:</div>
<div class="sr" style="left:811.8px;top:334.2px">0.33</div>
<div class="sr" style="left:720.6px;top:344.4px">Prepare and timelapse time:</div>
<div class="sr" style="left:811.8px;top:344.4px">6m4s + 7m25s</div>
<div class="sr" style="left:720.6px;top:354.6px">Model printing time:</div>
<div class="sr" style="left:811.8px;top:354.6px">1h46m</div>
<div class="sr" style="left:720.6px;top:364.8px">Total time:</div>
<div class="sr" style="left:811.8px;top:364.8px">1h59m</div>

<!-- vertical slider -->
<div class="a" style="left:1005.2px;top:106px;width:9.6px;height:380px;background:#fff;border-radius:4.8px"></div>
<div class="a" style="left:1007px;top:107px;width:6px;height:378px;background:#00ae42"></div>
<svg class="a" style="left:995px;top:95px" width="29" height="400">
 <circle cx="14.75" cy="12.5" r="6.6" fill="#fff"/><circle cx="14.75" cy="12.5" r="5.6" fill="#00ae42"/><path d="M11.5,12.5h6.5M14.75,9.3v6.4" stroke="#fff" stroke-width="1"/>
 <circle cx="14.8" cy="389.3" r="6.6" fill="#fff"/><circle cx="14.8" cy="389.3" r="5.6" fill="#00ae42"/>
</svg>
<div class="a" style="left:975.5px;top:88.8px;width:23px;height:18.3px;background:#fff"></div><svg class="a" style="left:997px;top:103px" width="8" height="8"><path d="M0,0 L6,5.5 L0,4 Z" fill="#fff"/></svg>
<div class="t" style="left:975.5px;top:90.5px;width:23px;text-align:center;font-size:6.8px;color:#1fb35a">700</div>
<div class="t" style="left:975.5px;top:98.5px;width:23px;text-align:center;font-size:6.8px;color:#1fb35a">49.08</div>
<div class="a" style="left:977.5px;top:485px;width:21px;height:17.3px;background:#fff"></div><svg class="a" style="left:997px;top:482px" width="8" height="8"><path d="M0,3 L6,0.5 L1.5,6 Z" fill="#fff"/></svg>
<div class="t" style="left:977.3px;top:487.3px;width:21px;text-align:center;font-size:6.8px;color:#1fb35a">1</div>
<div class="t" style="left:977.3px;top:495.3px;width:21px;text-align:center;font-size:6.8px;color:#1fb35a">0.20</div>
<svg class="a" style="left:1002px;top:531px" width="16" height="14"><path d="M7,1.5l5,2.5 -5,2.5 -5,-2.5z" fill="#00ae42"/><path d="M2,6.5l5,2.5 5,-2.5M2,9l5,2.5 5,-2.5" stroke="#00ae42" stroke-width="1.2" fill="none"/></svg>
<!-- horizontal slider -->
<div class="a" style="left:386.6px;top:531.7px;width:452px;height:13px;background:#fff;border-radius:6.5px"></div>
<div class="a" style="left:389.5px;top:535px;width:440px;height:7px;background:#00ae42;border-radius:3.5px"></div>
<svg class="a" style="left:820px;top:527px" width="40" height="21"><circle cx="11.8" cy="11.3" r="6.4" fill="#fff"/><circle cx="11.8" cy="11.3" r="5.4" fill="#00ae42"/><path d="M22.5,11.3l-2.5,1.5v-3z" fill="#fff"/></svg>
<div class="a" style="left:842.5px;top:533.2px;width:9.5px;height:10px;background:#fff"></div>
<div class="t" style="left:842.5px;top:535px;width:9.5px;text-align:center;font-size:6.6px;color:#00ae42">4</div>
</body></html>
